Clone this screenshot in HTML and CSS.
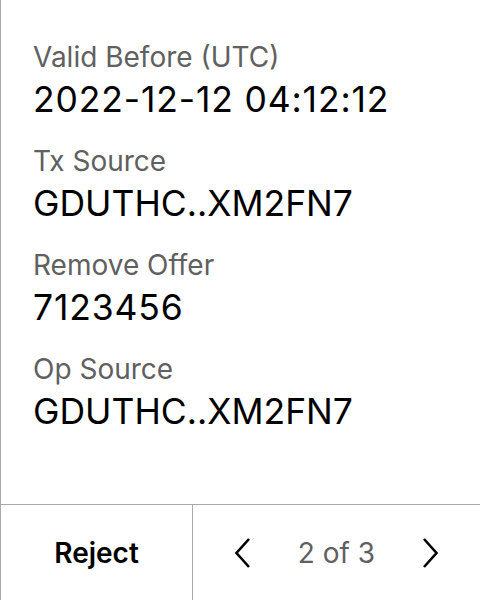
FILE: index.html
```html
<!DOCTYPE html>
<html>
<head>
<meta charset="utf-8">
<link rel="stylesheet" href="styles.css">
</head>
<body>
<div class="panel">
  <div class="details">
    <div class="field">
      <div class="label">Valid Before (UTC)</div>
      <div class="value num">2022-12-12 04:12:12</div>
    </div>
    <div class="field">
      <div class="label">Tx Source</div>
      <div class="value">GDUTHC..XM2FN7</div>
    </div>
    <div class="field">
      <div class="label">Remove Offer</div>
      <div class="value num">7123456</div>
    </div>
    <div class="field">
      <div class="label">Op Source</div>
      <div class="value">GDUTHC..XM2FN7</div>
    </div>
  </div>
  <div class="footer">
    <div class="reject">Reject</div>
    <div class="pager">
      <svg class="chev" width="18" height="32" viewBox="0 0 18 32"><path d="M15 2 L2.5 16 L15 30" fill="none" stroke="#000" stroke-width="2.6"/></svg>
      <span class="count">2 of 3</span>
      <svg class="chev" width="18" height="32" viewBox="0 0 18 32"><path d="M3 2 L15.5 16 L3 30" fill="none" stroke="#000" stroke-width="2.6"/></svg>
    </div>
  </div>
</div>
</body>
</html>
```
FILE: styles.css
```css
html, body {
  margin: 0;
  padding: 0;
  background: #fff;
}
body {
  font-family: Inter, "Noto Sans", sans-serif;
}
.panel {
  width: 480px;
  height: 600px;
  box-sizing: border-box;
  border-left: 1px solid #aaaaaa;
  display: flex;
  flex-direction: column;
}
.details {
  flex: 1;
  padding: 40px 0 0 32px;
  display: flex;
  flex-direction: column;
  gap: 22px;
}
.field {
  display: flex;
  flex-direction: column;
  gap: 4px;
}
.label {
  font-size: 28px;
  line-height: 34px;
  color: #606060;
}
.value {
  font-size: 35.5px;
  line-height: 44px;
  color: #000;
}
.value.num {
  letter-spacing: 0.85px;
}
.footer {
  height: 95px;
  border-top: 1px solid #aaaaaa;
  display: flex;
}
.reject {
  width: 191px;
  border-right: 1px solid #aaaaaa;
  display: flex;
  align-items: center;
  justify-content: center;
  font-size: 28px;
  font-weight: 600;
  color: #000;
}
.pager {
  flex: 1;
  display: flex;
  align-items: center;
  justify-content: center;
  gap: 46px;
}
.count {
  font-size: 28px;
  color: #606060;
}
```
